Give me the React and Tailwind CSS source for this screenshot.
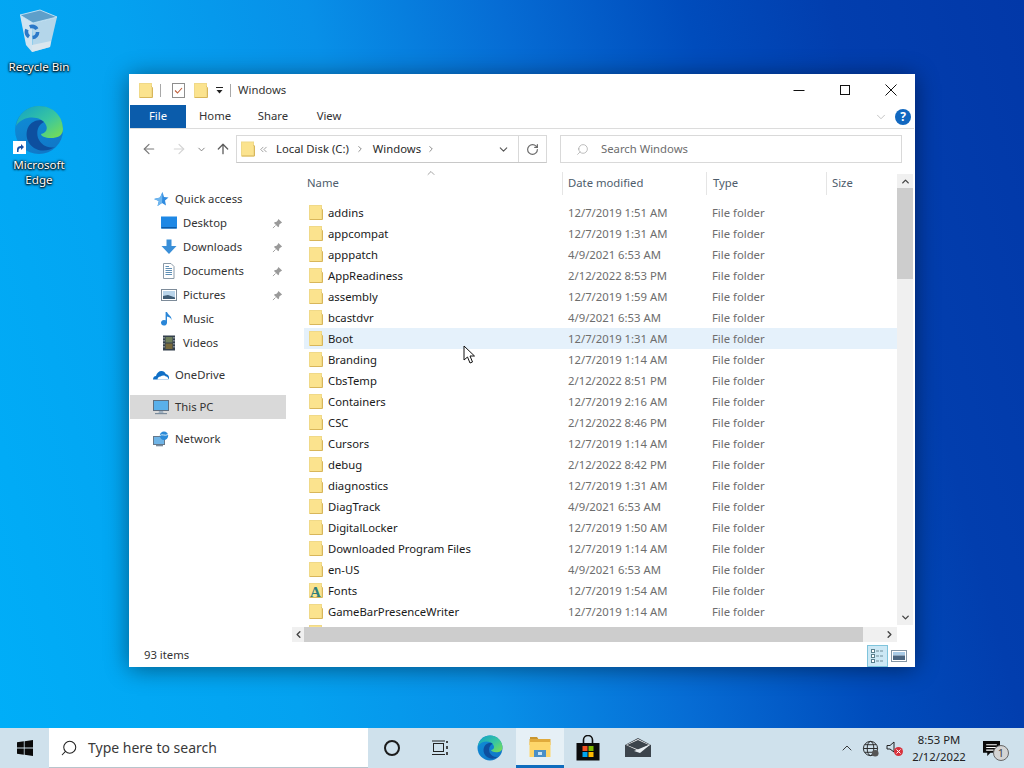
import React from "react";
import { ArrowLeft, ArrowRight, ArrowUp, ChevronDown, ChevronRight, ChevronLeft, ChevronUp, ChevronsLeft, RotateCw, Search } from "lucide-react";

const rows = [
  ["addins", "12/7/2019 1:51 AM"],
  ["appcompat", "12/7/2019 1:31 AM"],
  ["apppatch", "4/9/2021 6:53 AM"],
  ["AppReadiness", "2/12/2022 8:53 PM"],
  ["assembly", "12/7/2019 1:59 AM"],
  ["bcastdvr", "4/9/2021 6:53 AM"],
  ["Boot", "12/7/2019 1:31 AM"],
  ["Branding", "12/7/2019 1:14 AM"],
  ["CbsTemp", "2/12/2022 8:51 PM"],
  ["Containers", "12/7/2019 2:16 AM"],
  ["CSC", "2/12/2022 8:46 PM"],
  ["Cursors", "12/7/2019 1:14 AM"],
  ["debug", "2/12/2022 8:42 PM"],
  ["diagnostics", "12/7/2019 1:31 AM"],
  ["DiagTrack", "4/9/2021 6:53 AM"],
  ["DigitalLocker", "12/7/2019 1:50 AM"],
  ["Downloaded Program Files", "12/7/2019 1:14 AM"],
  ["en-US", "4/9/2021 6:53 AM"],
  ["Fonts", "12/7/2019 1:54 AM"],
  ["GameBarPresenceWriter", "12/7/2019 1:14 AM"],
];

function Folder({ className = "w-[14px] h-[15px]" }) {
  return (
    <svg viewBox="0 0 14 15" className={className}>
      <rect x="0.5" y="0.5" width="12" height="14" fill="#fbe38e" stroke="#f0d988" />
      <path d="M12.5 3.5 L13.5 4.5 V14.5 H1" fill="none" stroke="#d8b65a" />
    </svg>
  );
}

function FontsIcon() {
  return (
    <div className="relative w-[14px] h-[15px]">
      <Folder />
      <span className="absolute left-[1px] top-[2px] text-[15px] leading-[14px] font-bold text-[#2e7d7d] [font-family:'Liberation_Serif',serif]">A</span>
    </div>
  );
}

function Pin() {
  return (
    <svg viewBox="0 0 12 12" className="w-[11px] h-[11px]">
      <path d="M7 1 L11 5 L9.8 5.6 L8 7.2 L7.6 9.4 L6.8 10 L2.2 5.4 L2.8 4.6 L5 4.2 L6.4 2.4 Z" fill="#9a9a9a" />
      <path d="M3.8 8.2 L1 11" stroke="#9a9a9a" strokeWidth="1" />
    </svg>
  );
}

function NavIcon({ name }) {
  const c = "w-[16px] h-[16px]";
  if (name === "star")
    return (
      <svg viewBox="0 0 16 16" className={c}>
        <path d="M9.5 1 L11 6 L15.5 6.5 L12 9.6 L13 14.5 L9 12 L4.5 15 L5.8 10 L1 8 L7 6.5 Z" fill="#2f8be0" />
        <path d="M1 8 L7 6.5 L9.5 1 L9 12 L4.5 15 L5.8 10Z" fill="#6fb6ee" />
      </svg>
    );
  if (name === "desktop")
    return (
      <svg viewBox="0 0 16 16" className={c}>
        <rect x="0" y="1.5" width="16" height="12" fill="#1e88e5" />
        <rect x="0.5" y="12" width="15" height="1.5" fill="#0b5aa6" />
      </svg>
    );
  if (name === "downloads")
    return (
      <svg viewBox="0 0 16 16" className={c}>
        <path d="M5.5 0.5 H10.5 V7 H15.5 L8 15 L0.5 7 H5.5 Z" fill="#3a8fd8" />
      </svg>
    );
  if (name === "documents")
    return (
      <svg viewBox="0 0 16 16" className={c}>
        <path d="M2.5 0.5 H10 L13 3.5 V15.5 H2.5 Z" fill="#fff" stroke="#8a9aa8" />
        <path d="M4.5 5.5 H11 M4.5 7.5 H11 M4.5 9.5 H11 M4.5 11.5 H11 M4.5 3.5 H8" stroke="#5f8fb5" />
      </svg>
    );
  if (name === "pictures")
    return (
      <svg viewBox="0 0 16 16" className={c}>
        <rect x="0.5" y="2.5" width="15" height="11" fill="#fff" stroke="#7d8b99" />
        <rect x="2" y="4" width="12" height="8" fill="#b9d4ea" />
        <path d="M2 12 V9 L7 8 L14 10.5 V12Z" fill="#3f5c75" />
      </svg>
    );
  if (name === "music")
    return (
      <svg viewBox="0 0 16 16" className={c}>
        <path d="M6 1 V11.5 A3 2.8 0 1 1 4.2 9.2 L4.6 9.2 V1 H6 C7 4 11 5 10.5 9 C9.8 7 8 6 6 5.6 Z" fill="#2a86d8" />
      </svg>
    );
  if (name === "videos")
    return (
      <svg viewBox="0 0 16 16" className={c}>
        <rect x="2" y="0.5" width="12" height="15" fill="#34404c" />
        <rect x="4.5" y="2" width="7" height="5.5" fill="#6f7f5c" />
        <rect x="4.5" y="8.5" width="7" height="5.5" fill="#77693c" />
        <path d="M3 2 V14 M13 2 V14" stroke="#c8d0d8" strokeDasharray="1.5 1.5" />
      </svg>
    );
  if (name === "onedrive")
    return (
      <svg viewBox="0 0 16 16" className={c}>
        <path d="M0 12.5 C0 10 1.5 9 3 9 C3.5 6 6 4 8.5 4 C10.5 4 12 5 12.8 7 C14.8 7.2 16 9 16 10.5 C16 11.5 15.7 12 15.2 12.5 Z" fill="#0f6fc6" />
        <path d="M4.5 12.5 C4.5 10.5 6 9.5 7.5 9.5 C9 8 12 8 13 9.5 C14.5 9.5 15.5 11 15.2 12.5Z" fill="#fff" />
      </svg>
    );
  if (name === "pc")
    return (
      <svg viewBox="0 0 16 16" className={c}>
        <rect x="0.5" y="1.5" width="15" height="10" fill="#5ab0ea" stroke="#5f6f80" />
        <path d="M6 12 H10 L10.5 14 H5.5Z" fill="#9fb0bf" />
        <rect x="2" y="14" width="12" height="1.2" fill="#7a8b9b" />
      </svg>
    );
  return (
    <svg viewBox="0 0 16 16" className={c}>
      <rect x="0.5" y="5.5" width="11" height="8" fill="#6fb4e6" stroke="#66788a" />
      <rect x="3" y="14" width="7" height="1.3" fill="#7a8b9b" />
      <circle cx="11" cy="4.8" r="4.2" fill="#2a8ad8" />
      <path d="M7 4.5 C9 2.5 12 5.5 15 3.5" stroke="#cfe8f8" fill="none" />
    </svg>
  );
}

function NavRow({ icon, label, pin, indent, active }) {
  return (
    <div className={`flex items-center h-[24px] ${indent ? "pl-[31px]" : "pl-[23px]"} ${active ? "bg-[#d9d9d9]" : ""}`}>
      <NavIcon name={icon} />
      <span className="ml-[6px] flex-1">{label}</span>
      {pin && <span className="mr-[3px] flex"><Pin /></span>}
    </div>
  );
}

function RecycleBin() {
  return (
    <svg viewBox="0 0 44 46" className="w-[44px] h-[46px]">
      <path d="M3 6 L16 14 L15 43 L9 36 Z" fill="#cfe4f1" />
      <path d="M16 14 L40 8 L33 38 L15 43 Z" fill="#b4d6ea" />
      <path d="M3 6 L23 1 L40 8 L16 14 Z" fill="#5e9fca" />
      <path d="M3 6 L23 1 L40 8 L16 14 Z" fill="none" stroke="#dcedf7" strokeWidth="0.8" />
      <path d="M15 36 L15 43 L33 38 L34 32 Z" fill="#d9e6ee" />
      <circle cx="15" cy="23" r="5.6" fill="none" stroke="#2a78c8" strokeWidth="3.6" strokeDasharray="8 3.7" />
    </svg>
  );
}

function Edge({ size = 50, id = "e" }) {
  return (
    <svg viewBox="0 0 50 50" width={size} height={size}>
      <defs>
        <linearGradient id={`${id}a`} x1="0" y1="0" x2="1" y2="1">
          <stop offset="0" stopColor="#0fa0c8" />
          <stop offset="0.55" stopColor="#39c6a0" />
          <stop offset="1" stopColor="#7fe04c" />
        </linearGradient>
        <linearGradient id={`${id}b`} x1="0" y1="0" x2="0.6" y2="1">
          <stop offset="0" stopColor="#0f8fd8" />
          <stop offset="1" stopColor="#1078c8" />
        </linearGradient>
      </defs>
      <circle cx="25" cy="25" r="24" fill={`url(#${id}b)`} />
      <path d="M2 21 C4 8 14 1 25 1 C40 1 49 12 49 24 C49 31 43 33 37 33 C31 33 27 31 27 29 C32 28 34 24 32 20 C28 11 10 9 2 21 Z" fill={`url(#${id}a)`} />
      <path d="M27 15 C15 15 10 26 14 36 C18 45 30 49 41 42 C34 44 27 40 24 33 C22 26 24 20 30 17 Z" fill="#0d4f9f" />
    </svg>
  );
}

function Explorer() {
  return (
    <svg viewBox="0 0 24 24" className="w-[24px] h-[24px]">
      <path d="M2 2 H9 L11 5 H2Z" fill="#c9962e" />
      <rect x="1.5" y="4" width="21" height="6" fill="#e0aa3c" />
      <rect x="1.5" y="7" width="21" height="15" fill="#fdd66b" />
      <rect x="6" y="15" width="12" height="7" fill="#4a90c8" />
      <rect x="10" y="17" width="4" height="3" fill="#cbe4f5" />
    </svg>
  );
}

function Store() {
  return (
    <svg viewBox="0 0 24 26" className="w-[24px] h-[26px]">
      <path d="M7.5 9 V5 A4.5 4.5 0 0 1 16.5 5 V9" fill="none" stroke="#111" strokeWidth="1.6" />
      <rect x="0.5" y="8" width="23" height="17.5" fill="#0b0b0b" />
      <rect x="6.5" y="11" width="5" height="5" fill="#f25022" />
      <rect x="12.5" y="11" width="5" height="5" fill="#7fba00" />
      <rect x="6.5" y="17" width="5" height="5" fill="#00a4ef" />
      <rect x="12.5" y="17" width="5" height="5" fill="#ffb900" />
    </svg>
  );
}

function Mail() {
  return (
    <svg viewBox="0 0 26 20" className="w-[26px] h-[20px]">
      <path d="M13 0 L26 7 V19 H0 V7 Z" fill="#3c444c" />
      <path d="M1 7 L13 1 L25 7 L14 13Z" fill="#fff" opacity="0.95" />
      <path d="M2 7 L13 2 L24 7 L14 12Z" fill="#3c444c" />
      <path d="M26 6 L9 13 L15 15 Z" fill="#e8eef2" />
    </svg>
  );
}

const deskLabel = "text-white text-[11.6px] leading-[15px] text-center [text-shadow:0_0_2px_#000,0_1px_2px_#000,0_0_3px_#000]";

export default function App() {
  return (
    <div className="w-[1024px] h-[768px] flex flex-col overflow-hidden text-[11.3px] [font-family:'Noto_Sans','Liberation_Sans',sans-serif]">
      {/* desktop */}
      <div className="relative flex-1 bg-[linear-gradient(75deg,#00aef8_0%,#04a2f0_25%,#0890e8_41%,#066cd4_57%,#004cbc_72%,#023eae_84%,#0238a8_100%)]">
        <div className="absolute left-[1px] top-[9px] w-[76px] flex flex-col items-center">
          <RecycleBin />
          <div className={`${deskLabel} mt-[4px]`}>Recycle Bin</div>
        </div>
        <div className="absolute left-[1px] top-[105px] w-[76px] flex flex-col items-center">
          <div className="relative">
            <Edge id="d" />
            <div className="absolute left-[-1px] bottom-[1px] w-[13px] h-[13px] bg-white flex items-center justify-center">
              <svg viewBox="0 0 10 10" className="w-[10px] h-[10px]"><path d="M2 9 V6 C2 4 4 3 6 3 V1 L9 4 L6 7 V5 C4 5 3.5 6 3.5 9Z" fill="#1550a8" /></svg>
            </div>
          </div>
          <div className={`${deskLabel} mt-[2px]`}>Microsoft<br />Edge</div>
        </div>

        {/* window */}
        <div className="absolute left-[129px] top-[74px] w-[786px] h-[593px] bg-white border border-white flex flex-col text-[#1a1a1a] shadow-[0_2px_22px_rgba(0,0,0,0.45)]">
          {/* title bar */}
          <div className="h-[30px] flex items-center pl-[9px] shrink-0">
            <Folder />
            <div className="w-px h-[13px] bg-[#a8a8a8] ml-[7px] mr-[11px]" />
            <svg viewBox="0 0 13 15" className="w-[13px] h-[15px]">
              <rect x="0.5" y="0.5" width="12" height="14" fill="#fff" stroke="#8e8e8e" />
              <path d="M3 7.5 L5.5 10 L10 5" fill="none" stroke="#c0603c" strokeWidth="1.1" />
            </svg>
            <div className="ml-[9px] flex"><Folder /></div>
            <svg viewBox="0 0 9 9" className="w-[9px] h-[9px] ml-[7px]">
              <path d="M1 1.5 H8" stroke="#222" />
              <path d="M1.5 4 H7.5 L4.5 7.5Z" fill="#222" />
            </svg>
            <div className="w-px h-[13px] bg-[#a8a8a8] ml-[6px] mr-[7px]" />
            <span className="text-[#333]">Windows</span>
            <div className="ml-auto flex items-center">
              <div className="w-[46px] flex justify-center">
                <svg viewBox="0 0 12 12" className="w-[12px] h-[12px]"><path d="M0.5 6.5 H11.5" stroke="#111" /></svg>
              </div>
              <div className="w-[46px] flex justify-center">
                <svg viewBox="0 0 12 12" className="w-[12px] h-[12px]"><rect x="1.5" y="1.5" width="9" height="9" fill="none" stroke="#111" /></svg>
              </div>
              <div className="w-[46px] flex justify-center">
                <svg viewBox="0 0 12 12" className="w-[12px] h-[12px]"><path d="M0.5 0.5 L11.5 11.5 M11.5 0.5 L0.5 11.5" stroke="#111" /></svg>
              </div>
            </div>
          </div>
          {/* ribbon tabs */}
          <div className="h-[24px] flex items-stretch border-b border-[#dcdcdc] shrink-0">
            <div className="w-[56px] h-[23px] bg-[#0b5cab] text-white flex items-center justify-center">File</div>
            <div className="w-[58px] flex items-center justify-center text-[#333]">Home</div>
            <div className="w-[58px] flex items-center justify-center text-[#333]">Share</div>
            <div className="w-[54px] flex items-center justify-center text-[#333]">View</div>
            <div className="ml-auto flex items-center pr-[3px]">
              <ChevronDown className="w-[14px] h-[14px] text-[#bcbcbc] mr-[7px]" strokeWidth={1.5} />
              <div className="w-[16px] h-[16px] rounded-full bg-[#1268c0] text-white text-[12px] font-bold leading-[16px] text-center">?</div>
            </div>
          </div>
          {/* address row */}
          <div className="h-[40px] flex items-start pt-[6px] shrink-0">
            <div className="w-[106px] h-[28px] flex items-center pl-[11px] text-[#7a7a7a]">
              <ArrowLeft className="w-[16px] h-[16px]" strokeWidth={1.8} />
              <ArrowRight className="w-[16px] h-[16px] text-[#d4d4d4] ml-[14px]" strokeWidth={1.8} />
              <ChevronDown className="w-[11px] h-[11px] ml-[9px]" strokeWidth={2} />
              <ArrowUp className="w-[16px] h-[16px] ml-[8px] text-[#5f5f5f]" strokeWidth={2} />
            </div>
            <div className="w-[311px] h-[28px] border border-[#d9d9d9] border-b-[#c8c8c8] flex items-center">
              <div className="pl-[4px] flex"><Folder className="w-[14px] h-[16px]" /></div>
              <ChevronsLeft className="w-[11px] h-[11px] ml-[3px] text-[#777]" strokeWidth={1.5} />
              <span className="ml-[7px] text-[#2a2a2a]">Local Disk (C:)</span>
              <ChevronRight className="w-[10px] h-[10px] ml-[6px] text-[#777]" strokeWidth={2} />
              <span className="ml-[8px] text-[#2a2a2a]">Windows</span>
              <ChevronRight className="w-[10px] h-[10px] ml-[5px] text-[#777]" strokeWidth={2} />
              <ChevronDown className="w-[13px] h-[13px] ml-auto mr-[8px] text-[#555]" strokeWidth={2} />
              <div className="w-[28px] h-full border-l border-[#d9d9d9] flex items-center justify-center">
                <RotateCw className="w-[13px] h-[13px] text-[#6a6a6a]" strokeWidth={2.2} />
              </div>
            </div>
            <div className="ml-[13px] w-[342px] h-[28px] border border-[#d9d9d9] flex items-center pl-[15px] text-[#6d6d6d]">
              <Search className="w-[13px] h-[13px] text-[#9a9a9a] -scale-x-100" strokeWidth={1.2} />
              <span className="ml-[12px]">Search Windows</span>
            </div>
          </div>
          {/* body */}
          <div className="flex-1 flex min-h-0">
            <div className="w-[162px] pr-[6px] pt-[18px] shrink-0 text-[#333]">
              <NavRow icon="star" label="Quick access" />
              <NavRow icon="desktop" label="Desktop" indent pin />
              <NavRow icon="downloads" label="Downloads" indent pin />
              <NavRow icon="documents" label="Documents" indent pin />
              <NavRow icon="pictures" label="Pictures" indent pin />
              <NavRow icon="music" label="Music" indent />
              <NavRow icon="videos" label="Videos" indent />
              <div className="h-[8px]" />
              <NavRow icon="onedrive" label="OneDrive" />
              <div className="h-[8px]" />
              <NavRow icon="pc" label="This PC" active />
              <div className="h-[8px]" />
              <NavRow icon="network" label="Network" />
            </div>
            <div className="flex-1 flex flex-col min-w-0">
              <div className="flex flex-1 min-h-0">
                <div className="flex-1 flex flex-col min-w-0 pt-[3px]">
                  <div className="relative h-[23px] flex items-center text-[#4e5d6c] shrink-0">
                    <div className="w-[270px] pl-[15px]">Name</div>
                    <div className="w-[144px] h-full border-l border-[#e5e5e5] pl-[5px] flex items-center">Date modified</div>
                    <div className="w-[120px] h-full border-l border-[#e5e5e5] pl-[6px] flex items-center">Type</div>
                    <div className="flex-1 h-full border-l border-[#e5e5e5] pl-[5px] flex items-center">Size</div>
                    <ChevronUp className="absolute left-[133px] top-[-5px] w-[12px] h-[12px] text-[#666]" strokeWidth={1.2} />
                  </div>
                  <div className="flex-1 overflow-hidden pt-[7px] pl-[12px] min-h-0">
                    {rows.map(([n, d]) => (
                      <div key={n} className={`h-[21px] flex items-center ${n === "Boot" ? "bg-[#e5f1fb]" : ""}`}>
                        <div className="w-[264px] flex items-center pl-[5px] shrink-0">
                          {n === "Fonts" ? <FontsIcon /> : <Folder />}
                          <span className="ml-[5px] pt-px text-[#1a1a1a] whitespace-nowrap">{n}</span>
                        </div>
                        <div className="w-[144px] pt-px text-[#6d6d6d] shrink-0">{d}</div>
                        <div className="pt-px text-[#6d6d6d]">File folder</div>
                      </div>
                    ))}
                    <div className="h-[21px] flex items-center pl-[5px]"><Folder /></div>
                  </div>
                </div>
                <div className="w-[16px] mr-[1px] mt-[5px] mb-[2px] flex flex-col bg-[#f0f0f0] shrink-0">
                  <div className="h-[14px] flex items-center justify-center"><ChevronUp className="w-[11px] h-[11px] text-[#444]" strokeWidth={3} /></div>
                  <div className="h-[91px] bg-[#cdcdcd]" />
                  <div className="flex-1" />
                  <div className="h-[16px] flex items-center justify-center"><ChevronDown className="w-[11px] h-[11px] text-[#444]" strokeWidth={3} /></div>
                </div>
              </div>
              <div className="h-[15px] mb-[3px] mr-[17px] flex bg-[#f0f0f0] shrink-0">
                <div className="w-[12px] flex items-center justify-center"><ChevronLeft className="w-[11px] h-[11px] text-[#444]" strokeWidth={3} /></div>
                <div className="w-[559px] bg-[#cdcdcd]" />
                <div className="flex-1 flex items-center justify-end pr-[2px]"><ChevronRight className="w-[11px] h-[11px] text-[#444]" strokeWidth={3} /></div>
              </div>
            </div>
          </div>
          {/* status */}
          <div className="h-[21px] shrink-0 flex items-center pl-[14px] text-[#333]">
            <span>93 items</span>
            <div className="ml-auto flex items-center pr-[7px]">
              <div className="w-[21px] h-[22px] bg-[#cce8f5] border border-[#7fc4dc] flex items-center justify-center">
                <svg viewBox="0 0 15 16" className="w-[15px] h-[16px]">
                  <rect x="1.5" y="1.5" width="3" height="3" fill="#fff" stroke="#5a7f8c" />
                  <rect x="1.5" y="6.5" width="3" height="3" fill="#fff" stroke="#5a7f8c" />
                  <rect x="1.5" y="11.5" width="3" height="3" fill="#fff" stroke="#5a7f8c" />
                  <path d="M6 3 H14 M6 8 H14 M6 13 H14" stroke="#6f8c98" strokeDasharray="3 1" />
                </svg>
              </div>
              <svg viewBox="0 0 16 12" className="w-[16px] h-[12px] ml-[3px]">
                <rect x="0.5" y="0.5" width="15" height="11" fill="#fff" stroke="#8496a5" />
                <rect x="2" y="2" width="12" height="3.5" fill="#a9cbe6" />
                <rect x="2" y="5.5" width="12" height="4.5" fill="#4a6580" />
              </svg>
            </div>
          </div>
        </div>

        {/* cursor */}
        <svg viewBox="0 0 13 20" className="absolute left-[463px] top-[345px] w-[13px] h-[20px]">
          <path d="M1 1 L1 15 L4.5 12 L7 18 L9.5 17 L7 11 L11.5 11 Z" fill="#fff" stroke="#111" strokeWidth="1" />
        </svg>
      </div>

      {/* taskbar */}
      <div className="h-[40px] bg-[#cfe1ec] flex items-center shrink-0 relative">
        <div className="w-[49px] flex justify-center">
          <svg viewBox="0 0 16 16" className="w-[16px] h-[16px]">
            <path d="M0 2.3 L6.8 1.3 V7.5 H0 Z M7.6 1.2 L16 0 V7.5 H7.6 Z M0 8.4 H6.8 V14.7 L0 13.7 Z M7.6 8.4 H16 V16 L7.6 14.8 Z" fill="#0a0a0a" />
          </svg>
        </div>
        <div className="w-[319px] h-full bg-white flex items-center pl-[11px] border-b border-[#b8c4cc]">
          <Search className="w-[18px] h-[18px] text-[#222] -scale-x-100" strokeWidth={1.4} />
          <span className="ml-[10px] text-[14px] text-[#3a3a3a]">Type here to search</span>
        </div>
        <div className="w-[48px] flex justify-center">
          <div className="w-[16px] h-[16px] rounded-full border-[2.5px] border-[#1c1c1c]" />
        </div>
        <div className="w-[48px] flex justify-center">
          <svg viewBox="0 0 18 16" className="w-[18px] h-[16px]">
            <rect x="2.5" y="3.5" width="10" height="8" fill="none" stroke="#222" />
            <path d="M1 1 H14 M1 14.5 H14" stroke="#222" />
            <path d="M16 1 V3 M16 6 V9 M16 12 V15" stroke="#222" strokeWidth="1.6" />
          </svg>
        </div>
        <div className="w-[52px] flex justify-center"><Edge size={26} id="t" /></div>
        <div className="w-[48px] h-full bg-[#e6f0f6] border-b-[3px] border-[#0f6cbd] flex items-center justify-center"><Explorer /></div>
        <div className="w-[48px] flex justify-center"><Store /></div>
        <div className="w-[52px] flex justify-center"><Mail /></div>
        <div className="ml-auto flex items-center h-full">
          <ChevronUp className="w-[16px] h-[16px] text-[#222]" strokeWidth={1.3} />
          <svg viewBox="0 0 18 18" className="w-[17px] h-[17px] ml-[7px]">
            <circle cx="9" cy="9" r="7.5" fill="none" stroke="#222" />
            <ellipse cx="9" cy="9" rx="3.5" ry="7.5" fill="none" stroke="#222" />
            <path d="M1.5 9 H16.5 M3 5 H15 M3 13 H15" stroke="#222" />
            <circle cx="14" cy="14" r="3.5" fill="#555" />
          </svg>
          <svg viewBox="0 0 18 18" className="w-[18px] h-[18px] ml-[7px]">
            <path d="M1 6.5 H4 L8 3 V13 L4 10 H1 Z" fill="none" stroke="#222" />
            <circle cx="12.5" cy="12.5" r="4.5" fill="#d8323c" />
            <path d="M10.5 10.5 L14.5 14.5 M14.5 10.5 L10.5 14.5" stroke="#fff" />
          </svg>
          <div className="w-[68px] ml-[1px] text-center text-[11.3px] leading-[17px] text-[#222]">
            <div>8:53 PM</div>
            <div>2/12/2022</div>
          </div>
          <div className="relative w-[48px] h-full flex items-center justify-center mr-[9px] ml-[-6px]">
            <svg viewBox="0 0 16 16" className="w-[17px] h-[17px]">
              <path d="M0 1 H16 V12 H7 L4 15 V12 H0 Z" fill="#0a0a0a" />
              <path d="M3 4.5 H13 M3 7 H13 M3 9.5 H10" stroke="#fff" />
            </svg>
            <div className="absolute left-[26px] top-[17px] w-[16px] h-[16px] rounded-full bg-[#d4d4d4] border border-[#666] text-[#444] text-[11px] leading-[14px] text-center">1</div>
          </div>
        </div>
      </div>
    </div>
  );
}
